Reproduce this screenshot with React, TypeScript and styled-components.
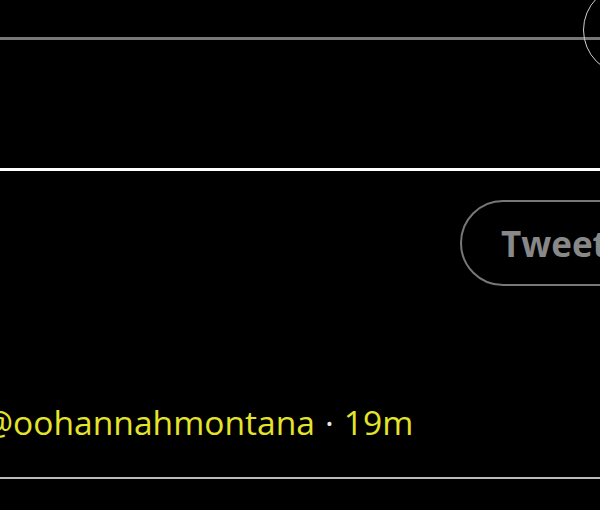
import { createGlobalStyle } from 'styled-components';
import styled from 'styled-components';

const GlobalStyle = createGlobalStyle`
  html, body {
    margin: 0;
    padding: 0;
    background: #000;
    overflow: hidden;
  }

  body {
    font-family: 'Open Sans', 'Noto Sans', sans-serif;
  }
`;

function App() {
  return (
    <>
      <GlobalStyle />
      <StyledPage>
        <StyledHeader>
          <Avatar />
        </StyledHeader>
        <StyledComposer />
        <StyledToolbar>
          <TweetButton type="button">Tweet</TweetButton>
        </StyledToolbar>
        <StyledTweet>
          <TweetMeta>
            <span>@oohannahmontana</span>
            <Separator>·</Separator>
            <span>19m</span>
          </TweetMeta>
        </StyledTweet>
      </StyledPage>
    </>
  );
}

export default App;

const StyledPage = styled.div`
  width: 600px;
  height: 510px;
  display: flex;
  flex-direction: column;
  overflow: hidden;
  background: #000;
`;

const StyledHeader = styled.header`
  position: relative;
  height: 37px;
  flex-shrink: 0;
  border-bottom: 3px solid #777;
`;

const Avatar = styled.div`
  position: absolute;
  top: -15px;
  right: -73px;
  width: 88px;
  height: 88px;
  border: 1.5px solid #d0d0d0;
  border-radius: 50%;
`;

const StyledComposer = styled.div`
  height: 128px;
  flex-shrink: 0;
  border-bottom: 3px solid #fff;
`;

const StyledToolbar = styled.div`
  display: flex;
  justify-content: flex-end;
  height: 86px;
  flex-shrink: 0;
  padding-top: 29px;
  margin-right: -60px;
`;

const TweetButton = styled.button`
  width: 200px;
  height: 86px;
  padding: 0 0 0 39px;
  display: flex;
  align-items: center;
  background: transparent;
  border: 2px solid #777;
  border-radius: 43px;
  color: #888;
  font-family: 'Open Sans', 'Noto Sans', sans-serif;
  font-size: 35px;
  font-weight: 700;
`;

const StyledTweet = styled.article`
  padding: 116px 0 35px;
  border-bottom: 2px solid #bbb;
  flex-shrink: 0;
`;

const TweetMeta = styled.div`
  margin-left: -17px;
  display: flex;
  gap: 10px;
  white-space: nowrap;
  font-size: 33.6px;
  line-height: 40px;
  color: #e4e42a;
`;

const Separator = styled.span`
  color: #e8e8e8;
`;
